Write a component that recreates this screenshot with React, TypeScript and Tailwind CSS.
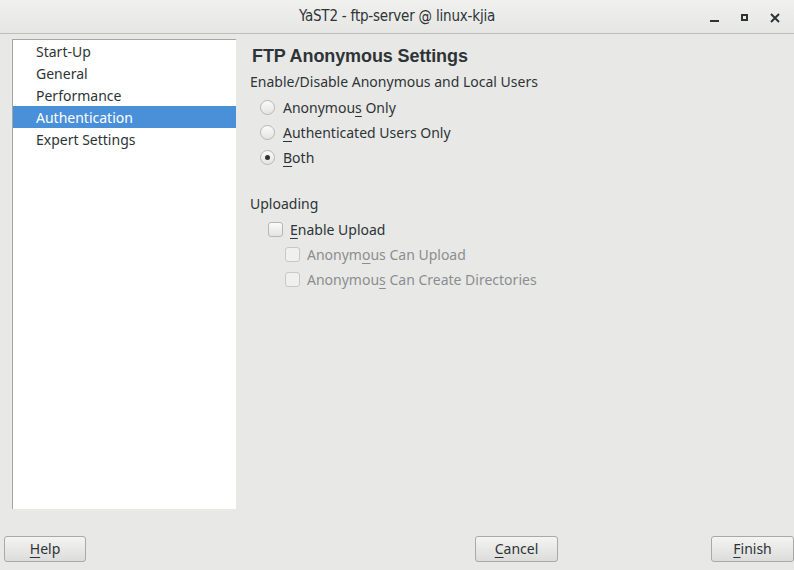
import { useState } from "react";

const font = { fontFamily: '"Noto Sans", "Open Sans", sans-serif' };

const menuItems = ["Start-Up", "General", "Performance", "Authentication", "Expert Settings"];

const Radio = ({ checked, label, ul }: { checked?: boolean; label: string; ul: number }) => (
  <div className="flex items-center h-[25px]">
    <span className="w-[15px] h-[15px] rounded-full border border-[#b6b6b3] bg-gradient-to-b from-[#fbfbfb] to-[#e4e4e2] flex items-center justify-center">
      {checked && <span className="w-[5px] h-[5px] rounded-full bg-[#2e3436]" />}
    </span>
    <span className="ml-[8px] text-[#2e3436]">
      {label.slice(0, ul)}
      <span className="underline underline-offset-[3px]">{label[ul]}</span>
      {label.slice(ul + 1)}
    </span>
  </div>
);

const Check = ({ label, ul, disabled }: { label: string; ul: number; disabled?: boolean }) => (
  <div className="flex items-center h-[25px]">
    <span
      className={`w-[15px] h-[15px] rounded-[3px] border ${
        disabled ? "border-[#c8c8c6] bg-[#f0f0ef]" : "border-[#b6b6b3] bg-gradient-to-b from-[#fbfbfb] to-[#e4e4e2]"
      }`}
    />
    <span className={`ml-[7px] ${disabled ? "text-[#8b8e8f]" : "text-[#2e3436]"}`}>
      {label.slice(0, ul)}
      <span className="underline underline-offset-[3px]">{label[ul]}</span>
      {label.slice(ul + 1)}
    </span>
  </div>
);

const Btn = ({ label }: { label: string }) => (
  <button className="w-[83px] h-[26px] rounded-[3px] border border-[#a9a9a7] bg-gradient-to-b from-[#f4f4f3] to-[#dcdcda] text-[#2e3436] text-[14px] leading-none">
    <span className="underline underline-offset-[3px]">{label[0]}</span>
    {label.slice(1)}
  </button>
);

export default function App() {
  const [selected, setSelected] = useState(3);

  return (
    <div className="w-[794px] h-[570px] bg-[#e8e8e7] flex flex-col overflow-hidden text-[14px]" style={font}>
      <div className="h-[34px] shrink-0 flex items-center relative bg-gradient-to-b from-[#f0f0ef] to-[#e6e6e5] border-b border-[#bdbdbb]">
        <div
          className="flex-1 text-center text-[15px] text-[#2e3436] tracking-[-0.2px]"
          style={{ fontFamily: '"DejaVu Sans Condensed", "Liberation Sans Narrow", sans-serif' }}
        >
          YaST2 - ftp-server @ linux-kjia
        </div>
        <div className="absolute right-[14px] top-0 h-[33px] flex items-center gap-[22px] text-[#2e3436]">
          <span className="w-[9px] h-[2px] bg-[#2e3436] mt-[8px]" />
          <span className="w-[7px] h-[7px] border-[2px] border-[#2e3436] mt-[2px]" />
          <svg width="10" height="10" viewBox="0 0 10 10" className="mt-[2px]">
            <path d="M1 1 L9 9 M9 1 L1 9" stroke="#2e3436" strokeWidth="2" />
          </svg>
        </div>
      </div>

      <div className="flex flex-1 pt-[5px]">
        <div className="ml-[12px] w-[224px] h-[470px] bg-white border-l border-t border-[#a6a6a4] flex flex-col">
          {menuItems.map((m, i) => (
            <div
              key={m}
              onClick={() => setSelected(i)}
              className={`h-[22px] flex items-center pl-[23px] ${
                i === selected ? "bg-[#4a90d9] text-white" : "text-[#2e3436]"
              }`}
            >
              {m}
            </div>
          ))}
        </div>

        <div className="flex flex-col pl-[14px] pt-[6px]">
          <div
            className="text-[18px] font-bold text-[#2e3436] leading-[22px] pl-[2px] tracking-[-0.1px]"
            style={{ fontFamily: '"Liberation Sans", Arial, sans-serif' }}
          >
            FTP Anonymous Settings
          </div>
          <div className="mt-[3px] h-[22px] flex items-center text-[#2e3436]">
            Enable/Disable Anonymous and Local Users
          </div>
          <div className="pl-[10px] mt-[3px]">
            <Radio label="Anonymous Only" ul={8} />
            <Radio label="Authenticated Users Only" ul={0} />
            <Radio label="Both" ul={0} checked />
          </div>
          <div className="mt-[22px] h-[22px] flex items-center text-[#2e3436]">Uploading</div>
          <div className="pl-[18px] mt-[3px]">
            <Check label="Enable Upload" ul={0} />
            <div className="pl-[17px]">
              <Check label="Anonymous Can Upload" ul={6} disabled />
              <Check label="Anonymous Can Create Directories" ul={8} disabled />
            </div>
          </div>
        </div>
      </div>

      <div className="h-[62px] shrink-0 flex items-start pt-[27px] pl-[4px]">
        <Btn label="Help" />
        <div className="ml-[389px]">
          <Btn label="Cancel" />
        </div>
        <div className="ml-[153px]">
          <Btn label="Finish" />
        </div>
      </div>
    </div>
  );
}
